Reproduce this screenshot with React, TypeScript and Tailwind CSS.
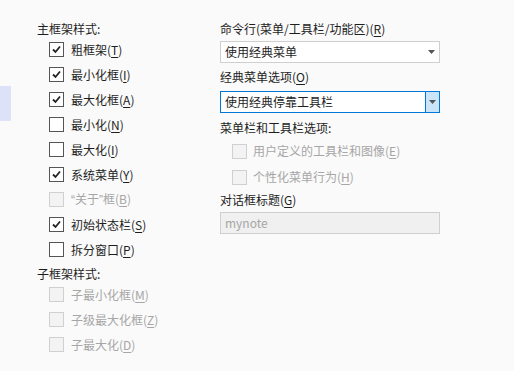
import React from "react";

const font = { fontFamily: '"Noto Sans CJK SC", "Noto Sans", sans-serif' };

function Mn({ text, k }: { text: React.ReactNode; k: string }) {
  return (
    <span>
      {text}(<span className="underline underline-offset-2">{k}</span>)
    </span>
  );
}

function Box({ checked, disabled }: { checked?: boolean; disabled?: boolean }) {
  return (
    <div
      className={
        "w-[15px] h-[15px] border flex items-center justify-center shrink-0 " +
        (disabled ? "border-[#d0d0d0] bg-[#f3f3f3]" : "border-[#555555] bg-white")
      }
    >
      {checked && (
        <svg width="11" height="11" viewBox="0 0 11 11">
          <polyline points="2,5.5 4.5,8 9,2.5" fill="none" stroke="#222" strokeWidth="1.8" />
        </svg>
      )}
    </div>
  );
}

function Row({
  label,
  k,
  checked,
  disabled,
}: {
  label: React.ReactNode;
  k: string;
  checked?: boolean;
  disabled?: boolean;
}) {
  return (
    <div className="h-[25px] flex items-center gap-[7px] pl-[12px]">
      <Box checked={checked} disabled={disabled} />
      <span className={disabled ? "text-[#a6a6a6]" : "text-[#1e1e1e]"}>
        <Mn text={label} k={k} />
      </span>
    </div>
  );
}

function Arrow() {
  return (
    <svg width="7" height="4" viewBox="0 0 7 4">
      <polygon points="0,0 7,0 3.5,4" fill="#555" />
    </svg>
  );
}

const q = { fontFamily: '"Liberation Sans", sans-serif' };

export default function App() {
  return (
    <div
      className="w-[514px] h-[371px] bg-[#fafafa] flex text-[12px] leading-[16px] text-[#1e1e1e] overflow-hidden"
      style={font}
    >
      <div className="w-[11px] shrink-0">
        <div className="mt-[86px] h-[35px] bg-[#dde2f8]" />
      </div>
      <div className="w-[209px] shrink-0 pl-[26px] pt-[21px] flex flex-col">
        <div>主框架样式:</div>
        <Row label="粗框架" k="T" checked />
        <Row label="最小化框" k="I" checked />
        <Row label="最大化框" k="A" checked />
        <Row label="最小化" k="N" />
        <Row label="最大化" k="I" />
        <Row label="系统菜单" k="Y" checked />
        <Row
          label={
            <>
              <span style={q}>“</span>关于<span style={q}>”</span>框
            </>
          }
          k="B"
          disabled
        />
        <Row label="初始状态栏" k="S" checked />
        <Row label="拆分窗口" k="P" />
        <div className="mt-[4px]">子框架样式:</div>
        <Row label="子最小化框" k="M" disabled />
        <Row label="子级最大化框" k="Z" disabled />
        <Row label="子最大化" k="D" disabled />
      </div>
      <div className="w-[220px] shrink-0 pt-[21px] flex flex-col">
        <div>
          <Mn text="命令行(菜单/工具栏/功能区)" k="R" />
        </div>
        <div className="mt-[4px] h-[22px] border border-[#cfcfcf] bg-white flex items-center justify-between pl-[4px] pr-[4px]">
          <span>使用经典菜单</span>
          <Arrow />
        </div>
        <div className="mt-[6px]">
          <Mn text="经典菜单选项" k="O" />
        </div>
        <div className="mt-[6px] h-[22px] border border-[#0078d7] bg-white flex items-stretch">
          <span className="flex-1 flex items-center pl-[4px]">使用经典停靠工具栏</span>
          <div className="w-[14px] border-l border-[#0078d7] bg-[#cce4f7] flex items-center justify-center">
            <Arrow />
          </div>
        </div>
        <div className="mt-[7px]">菜单栏和工具栏选项:</div>
        <div className="h-[26px] mt-[2px] flex items-center gap-[6px] pl-[12px]">
          <Box disabled />
          <span className="text-[#a6a6a6]">
            <Mn text="用户定义的工具栏和图像" k="E" />
          </span>
        </div>
        <div className="h-[26px] flex items-center gap-[6px] pl-[12px]">
          <Box disabled />
          <span className="text-[#a6a6a6]">
            <Mn text="个性化菜单行为" k="H" />
          </span>
        </div>
        <div className="mt-[2px]">
          <Mn text="对话框标题" k="G" />
        </div>
        <div className="mt-[4px] h-[22px] border border-[#cfcfcf] bg-[#f0f0f0] flex items-center pl-[4px] text-[#a6a6a6]">
          mynote
        </div>
      </div>
    </div>
  );
}
